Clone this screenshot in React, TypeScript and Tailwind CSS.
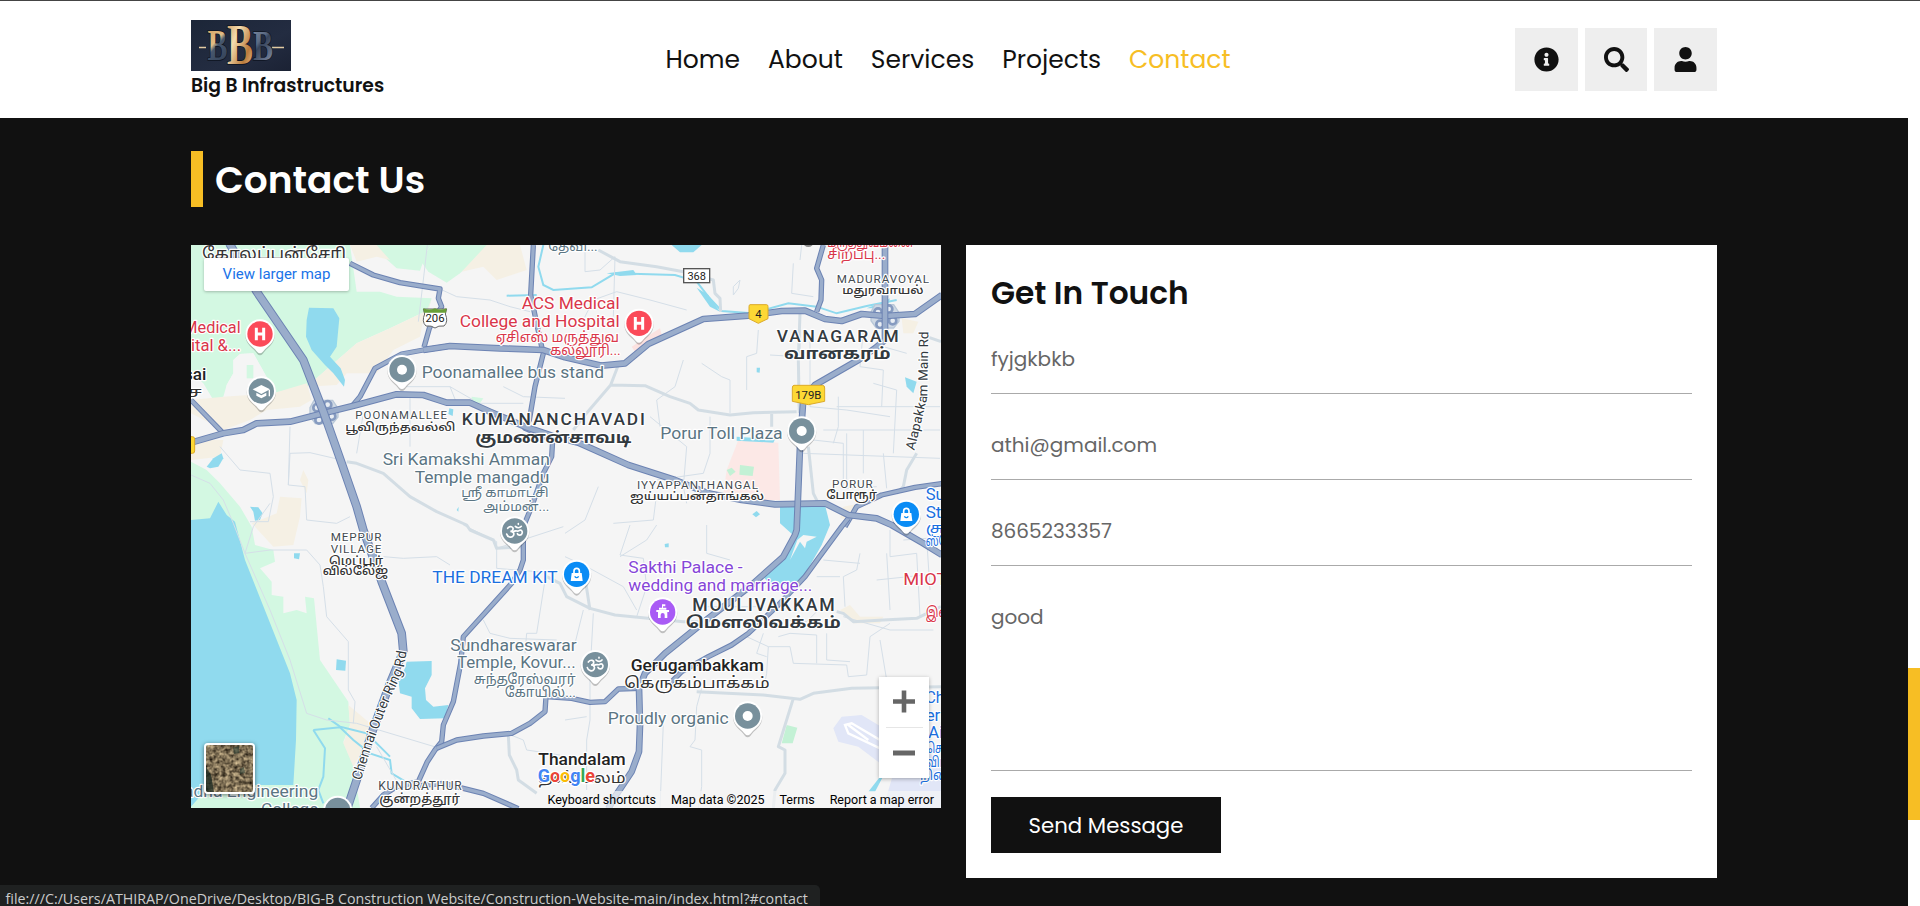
import React from "react";
import { FaInfoCircle, FaSearch, FaUser } from "react-icons/fa";

const NAV = [
  { label: "Home", cls: "text-[#111]" },
  { label: "About", cls: "text-[#111]" },
  { label: "Services", cls: "text-[#111]" },
  { label: "Projects", cls: "text-[#111]" },
  { label: "Contact", cls: "text-[#f7be24]" },
];

/* ---------- map geometry: 3 units per pixel ---------- */

const GREEN = [
  "M3 15H480L500 155L570 155L620 170L725 175L715 210L600 265L500 310L350 440L245 460L230 410L190 340L150 342L130 360L130 400L110 435L100 470L70 480L40 430L3 400Z",
  "M560 15H725L712 30L690 92L620 85L570 40Z",
  "M725 15H900L870 45L810 100L770 128L715 95L690 60Z",
  "M3 665L50 690L90 730L150 800L185 860L195 915L250 930L255 965L210 985L245 1025L245 1065L280 1070L280 1120L320 1110L350 1120L345 1070L372 1075L390 1260L475 1385L480 1455L460 1505L490 1575L510 1704H3Z",
  "M170 375h20v40h-20Z",
  "M845 470L880 475L870 490L845 485Z",
];
const BEIGE = [
  "M890 15H990L1010 90L920 120L880 80L815 95Z",
  "M725 175L700 240L690 290L610 330L560 400L470 400L440 435L350 440L500 310L600 265L715 210Z",
  "M250 460L350 430L365 480L330 500L230 510L180 540L100 570L3 520V600L100 600L90 650L3 660V480L100 470Z",
  "M480 15H560L600 60L560 50L500 65Z",
  "M270 770L335 775L330 830L310 915L250 920L185 850L260 820Z",
  "M475 1395L540 1450L530 1510L490 1580L460 1510L480 1455Z",
  "M1950 1110L1980 1095L2010 1130L2080 1130L2070 1150L1990 1150Z",
  "M2135 235L2185 245L2170 280L2140 280Z",
  "M1960 800L2010 790L1990 840L1950 835Z",
  "M340 690L355 720L350 760L330 720Z",
];
const CLEARING = "M150 342L190 340L215 385L232 420L245 460L180 468L105 470L110 435L130 400L130 360Z";
const WATER = [
  "M357 203L430 205L448 235L440 320L420 350L452 385L465 420L462 440L430 400L405 375L365 330L348 290L350 240Z",
  "M3 840L60 835L85 785L110 825L135 845L165 960L300 1300L320 1380L318 1500L310 1635H60L3 1700Z",
  "M50 680L70 655L95 640L100 655L85 680L60 685Z",
  "M180 800L205 802L218 820L210 840L195 842L190 815Z",
  "M1445 15H1535L1510 37L1470 37Z",
  "M1520 143L1555 165L1590 215L1560 200Z",
  "M1770 800L1905 795L1920 855L1895 915L1835 1020L1750 1045L1720 1010L1785 950L1815 890L1770 850Z",
  "M650 1265L725 1263L725 1305L705 1345L708 1380L730 1400L775 1395L765 1435L690 1437L665 1405L665 1370L630 1360L625 1320L645 1285Z",
  "M440 1258L468 1262L466 1292L438 1290Z",
  "M312 940L330 940L327 958L312 955Z",
  "M2145 412L2180 425L2170 460L2150 440Z",
  "M1640 590L1755 598L1750 608L1640 602Z",
  "M1700 383L1710 383L1709 398L1700 397Z",
  "M1687 823L1700 813L1710 823L1698 832Z",
  "M1424 912L1436 910L1436 922L1425 922Z",
  "M778 505L790 508L788 528L775 522Z",
  "M800 810L806 800L805 815Z",
  "M2035 1655L2070 1610L2078 1612L2055 1655Z",
  "M1250 100L1330 90L1340 105L1290 108Z",
  "M2080 185L2100 175L2090 205L2030 205Z",
];
const STREAMS = [
  "M1060 15L1045 80L1060 135L1090 150L1205 142L1275 100L1455 105L1520 125L1555 170L1595 213L1685 220L1795 190L1880 200L1940 220L2030 198L2120 180",
  "M950 167L1040 165",
  "M370 1470L405 1525L400 1610L385 1650L400 1690",
  "M370 1470L450 1462L490 1500L540 1540L600 1560L605 1600L655 1630",
  "M415 1435L450 1460L490 1470L530 1480L600 1550",
];
const MINOR = [
  "M685 245L700 120L712 15M750 147L800 170L900 180L960 200L1020 215",
  "M500 640L520 520M300 640L295 735L345 740L350 840L440 850L480 830",
  "M300 640L360 638L455 660M295 735L300 560",
  "M90 620L150 690L240 700L250 770L235 845L180 845",
  "M3 705L60 730L100 780L130 850L165 940L240 1110L300 1260L350 1420L410 1440L500 1450L740 1522",
  "M165 940L240 930L350 930L390 975L400 1040L410 1130L475 1205L475 1350L495 1385L490 1450",
  "M165 940L190 860L240 790M580 950L640 955L740 950L780 975",
  "M940 440L1000 470L1125 475M650 440L780 440L850 480M660 470L660 620M780 440L800 490L1000 490",
  "M820 855L920 905L920 985L1100 1000M920 925L1120 860M1065 1020L1040 1180L1010 1180L1005 1240",
  "M880 1140L900 1180L960 1195L1100 1200",
  "M1180 240L1210 180L1280 155L1380 180L1490 210M1185 15V95L1230 90L1275 50L1270 230",
  "M1480 360L1455 440L1400 480L1410 560M1535 370L1595 410L1620 420V520M1705 270L1700 340L1670 350V450",
  "M1380 530L1490 620L1480 740L1490 790M1560 530V640L1540 700L1400 720",
  "M1810 70L1805 160L1870 170M1835 15L1830 60M1630 140L1650 120L1645 145L1630 165Z",
  "M1740 345L1825 350V500M1830 270V340M1860 290V500L1970 510L2100 530",
  "M1945 470V560L1930 610M1940 500H2250M2020 270L2010 380L2080 390L2075 500",
  "M2080 320L2150 340M2050 430L2120 450L2110 640M1900 570H2250M1970 580V720M2020 570V700",
  "M1870 600L1960 610V745L2060 740M1840 640L2250 655M2080 640L2090 745",
  "M1400 855L1370 900L1290 950M1320 855L1290 945L1360 955L1370 1040L1340 1130",
  "M1125 880L1185 840L1225 740M1400 760L1390 840L1270 850M1550 855V940L1620 960",
  "M1180 1110L1150 1230M1210 1120L1200 1300L1200 1440L1190 1500V1650",
  "M1535 1345L1520 1400L1515 1500L1500 1520L1535 1530V1640L1525 1704",
  "M1670 1190L1735 1220L1730 1300L1720 1350M1765 1190L1800 1180L1880 1185V1270M1910 1180V1260L1980 1265",
  "M1735 1220H1800L1810 1270L1970 1275L1975 1310L2030 1305L2040 1190L2100 1150",
  "M2010 940L2000 990L1960 1010L1965 1100M2090 940L2100 1110M2100 870V950L2180 940L2190 1130",
  "M2060 1020L2250 1000M2140 900L2210 895L2220 1050M1960 1130L2100 1170L2230 1170M2070 1200L2090 1320",
  "M1880 1010L1950 1010M1900 960L2010 970M1780 1140L1850 1145L1880 1115",
  "M1340 1110L1300 1040L1190 980L1125 950M1125 1440L1190 1430M1420 1450L1410 1704",
  "M1530 1100H1700M1720 1180L1700 1240L1730 1250M560 1520L630 1640M950 1480L1000 1500L1010 1530L1110 1545",
];
const COLLECTOR = [
  "M470 665L500 670L580 700L660 770L740 815L830 855L840 870L910 900L920 925L1000 920",
  "M1225 30L1290 65L1400 80L1480 95L1570 120L1575 160L1590 175L1592 215",
  "M1285 375L1262 435L1185 525L1150 570M1262 435L1365 437L1440 470L1500 490L1525 510L1620 525L1690 518L1820 515",
  "M1830 220L1825 360L1828 520M1745 522V560M1855 620L1870 760L1885 790",
  "M2180 640L2150 690L2140 740L2120 760M2210 290L2253 305",
  "M1070 1010L1110 1030L1130 1070L1200 1105L1275 1125L1480 1145L1580 1145M1200 1110L1180 980",
  "M1520 1355L1720 1365L1830 1378L1870 1360L1985 1345L2253 1340M1810 1375L1765 1520L1785 1530V1600L1755 1650L1750 1704",
  "M1940 1115L1960 1120L1990 1145L2080 1140L2180 1135L2253 1100",
  "M955 1485L958 1545L980 1590L985 1620L1040 1660",
];
const HIGHWAYS = [
  "M480 70L550 105L630 128L750 147L745 175L755 200L735 230L718 265L702 322",
  "M485 500L510 470L555 385L635 342L700 330L780 318",
  "M3 480L95 575",
  "M1030 15L1022 165L1055 320L1060 340L1035 440L1018 540L1005 565L1088 600L1085 650L1060 700L1025 800L1000 860L1000 960L990 990L965 1030L820 1190L812 1270L790 1385L760 1455L755 1505L735 1530L712 1565L685 1625L620 1640L580 1665L545 1704",
  "M740 1525L800 1500L880 1488L965 1480L1020 1450L1065 1415L1068 1370L1145 1375L1200 1387L1245 1385L1285 1347L1350 1345",
  "M660 1640L760 1630L820 1645L880 1660L960 1695L985 1706",
  "M1900 15L1880 85L1895 120L1893 180L1880 215",
  "M1965 860L2000 800L2075 765L2175 742L2256 731",
  "M1975 835L1955 860L1885 955L1845 1010L1765 1095L1675 1180L1625 1215L1555 1250L1475 1295L1440 1330",
];
const TRUNK = [
  "M3 608L100 580L160 570L200 550L300 545L400 520L500 495L620 463L700 465L770 488L840 488L900 515L1005 560L1088 588L1165 608L1315 675L1455 720L1555 760L1655 780L1755 793L1905 790L1975 825L2060 835L2105 855L2200 910L2256 945",
  "M700 330L780 318L930 325L1060 330L1125 352L1235 377L1305 370L1375 312L1540 237L1675 227L1775 213L1845 212L1905 237L1955 243L2015 222L2085 228L2175 222L2256 165",
  "M2085 12V300L2055 325L2005 360L1875 435L1840 475L1837 520L1830 620L1820 870L1815 885L1780 950L1685 1035L1555 1135L1425 1240L1365 1300L1347 1345L1350 1455L1347 1535L1325 1595L1275 1670L1255 1706",
];
const RING = "M118 10L150 65L200 155L340 360L400 515L455 670L500 800L520 870L575 1025L635 1180L640 1235L600 1330L545 1480L500 1620L470 1710";

function Road({ d, w, fill = "#9aadcb", edge = "#6c83b3" }: { d: string; w: number; fill?: string; edge?: string }) {
  return (
    <g fill="none" strokeLinejoin="round">
      <path d={d} stroke={edge} strokeWidth={w} />
      <path d={d} stroke={fill} strokeWidth={w - 6} />
    </g>
  );
}

type LabelProps = {
  x: number;
  y: number;
  w: number;
  size?: number;
  color?: string;
  weight?: number;
  spaced?: boolean;
  children: string;
};

function Label({ x, y, w, size = 52, color = "#5b7583", weight = 400, spaced, children }: LabelProps) {
  return (
    <text
      x={x}
      y={y}
      textLength={w}
      lengthAdjust={spaced ? "spacing" : "spacingAndGlyphs"}
      fontSize={size}
      fontWeight={weight}
      fill={color}
      stroke="#fff"
      strokeWidth={7}
      strokeLinejoin="round"
      paintOrder="stroke"
    >
      {children}
    </text>
  );
}

function Pin({ x, y, color, children }: { x: number; y: number; color: string; children?: React.ReactNode }) {
  return (
    <g transform={`translate(${x} ${y})`}>
      <path
        d="M0 60C-6 60-10 53-15 47C-22 38-44 26-44 0A44 44 0 0 1 44 0C44 26 22 38 15 47C10 53 6 60 0 60Z"
        fill="#000"
        opacity=".22"
        transform="translate(0 4)"
      />
      <path d="M0 58C-6 58-10 52-15 46C-22 38-44 26-44 0A44 44 0 0 1 44 0C44 26 22 38 15 46C10 52 6 58 0 58Z" fill="#fff" />
      <circle r="38" fill={color} />
      {children}
    </g>
  );
}

const Dot = () => <circle r="15" fill="#fff" />;
const Hospital = () => <path d="M-11 -19V19M11 -19V19M-11 0H11" stroke="#fff" strokeWidth="9" fill="none" />;
const Om = () => (
  <g fill="none" stroke="#fff" strokeWidth="5" strokeLinecap="round">
    <path d="M-21 -8C-14 -17-3 -13-5 -5C-6 0-12 1-13 1C-4 1 0 8-4 14C-9 22-22 18-24 9" />
    <path d="M-5 3C4 -4 8 3 13 -1C20 -6 25 2 22 8C19 15 10 13 8 8" />
    <path d="M2 -14C8 -8 16 -9 20 -14M11 -22V-20" />
  </g>
);
const Bag = () => (
  <g>
    <path d="M-15 -4H15L18 20H-18Z" fill="#fff" />
    <path d="M-8 -3V-10A8 8 0 0 1 8 -10V-3" fill="none" stroke="#fff" strokeWidth="5" />
    <path d="M-6 6Q0 14 6 6" fill="none" stroke="#0a8cf5" strokeWidth="4" />
  </g>
);

function Interchange({ x, y }: { x: number; y: number }) {
  return (
    <g transform={`translate(${x} ${y})`}>
      <path d="M-30 -34H26L42 -10V16L26 36H-26L-42 14V-12Z" fill="#cfd9e4" stroke="#b9c8d8" strokeWidth="4" />
      <g fill="#e8edf3" stroke="#869bc0" strokeWidth="8">
        <circle cx="-21" cy="-12" r="11" />
        <circle cx="11" cy="-21" r="11" />
        <circle cx="23" cy="14" r="11" />
        <circle cx="-15" cy="25" r="11" />
      </g>
    </g>
  );
}

function MapArt() {
  return (
    <svg
      viewBox="3 15 2250 1689"
      className="block h-full w-full font-[Roboto,'Noto_Sans_Tamil','Noto_Sans',sans-serif]"
      preserveAspectRatio="none"
    >
      <rect x="0" y="0" width="2256" height="1710" fill="#f5f5f5" />
      <g fill="#d3f8e2">{GREEN.map((d) => <path key={d} d={d} />)}</g>
      <path d={CLEARING} fill="#f5f5f5" />
      <path d="M170 375h20v40h-20Z" fill="#d3f8e2" />
      <g fill="#f5f0e4">{BEIGE.map((d) => <path key={d} d={d} />)}</g>
      <path d="M1645 600L1765 608L1770 780L1690 780L1600 760L1610 690Z" fill="#fce8e6" />
      <path d="M1325 320L1370 290L1410 265L1415 285L1370 320L1335 335Z" fill="#fce2e0" />
      <path d="M1650 675L1692 680L1688 708L1648 704ZM1610 690L1625 683L1637 695L1620 708ZM1790 1455L1822 1463L1808 1510L1775 1510Z" fill="#c3f1d5" />
      <path d="M1930 1465L1955 1430L2015 1425L2065 1455L2253 1560V1704H2080L2110 1600L2005 1520L1945 1505Z" fill="#e1e6f7" />
      <path d="M1965 1455L1985 1450L2070 1500V1525L1975 1480ZM1975 1455L2035 1500" fill="none" stroke="#fff" strokeWidth="7" />
      <g fill="#90daee">{WATER.map((d) => <path key={d} d={d} />)}</g>
      <path d="M1822 900L1840 885L1880 890L1850 905L1845 925L1830 905L1800 960Z" fill="#f5f5f5" />
      <g fill="none" stroke="#90daee" strokeWidth="6">{STREAMS.map((d) => <path key={d} d={d} />)}</g>
      <g fill="none" stroke="#d5dfe8" strokeWidth="3">{MINOR.map((d) => <path key={d} d={d} />)}</g>
      <g fill="none" stroke="#d3dde4" strokeWidth="9" strokeLinejoin="round">{COLLECTOR.map((d) => <path key={d} d={d} />)}</g>
      <Interchange x={402} y={515} />
      <Interchange x={2085} y={228} />
      {HIGHWAYS.map((d) => <Road key={d} d={d} w={16} />)}
      {TRUNK.map((d) => <Road key={d} d={d} w={20} />)}
      <Road d={RING} w={26} />

      {/* route shields */}
      <path d="M700 207H770L766 222Q776 245 762 258Q745 256 735 264Q725 256 708 258Q694 245 704 222Z" fill="#fff" stroke="#666" strokeWidth="3" />
      <path d="M700 205Q718 212 735 205Q752 212 770 205L768 218H702Z" fill="#689f38" />
      <text x="735" y="246" textAnchor="middle" fontSize="34" fill="#222">206</text>
      <rect x="1481" y="86" width="78" height="42" fill="#fff" stroke="#555" strokeWidth="4" />
      <text x="1520" y="120" textAnchor="middle" fontSize="33" fill="#222">368</text>
      <path d="M1680 194H1730Q1734 194 1734 200V236L1705 250L1677 236V200Q1677 194 1680 194Z" fill="#fdd835" stroke="#dcaa28" strokeWidth="3" />
      <text x="1705" y="234" textAnchor="middle" fontSize="34" fill="#222">4</text>
      <path d="M1812 436H1898Q1904 436 1904 444V484L1855 494L1807 484V444Q1807 436 1812 436Z" fill="#fdd835" stroke="#dcaa28" strokeWidth="3" />
      <text x="1855" y="478" textAnchor="middle" fontSize="34" fill="#222">179B</text>
      <rect x="-20" y="590" width="34" height="50" rx="7" fill="#fdd835" stroke="#dcaa28" strokeWidth="3" />

      {/* places */}
      <Label x={36} y={56} w={432} size={48} color="#333">கோலப்பன்சேரி</Label>
      <Label x={1075} y={32} w={148} size={40}>தேவி...</Label>
      <Label x={-20} y={280} w={172} color="#d9364a">Medical</Label>
      <Label x={3} y={333} w={150} color="#d9364a">ital &amp;...</Label>
      <Label x={-18} y={419} w={67} size={48} color="#222" weight={500}>sai</Label>
      <Label x={-10} y={471} w={46} size={44} color="#333">ச</Label>
      <Label x={995} y={207} w={294} color="#d9364a">ACS Medical</Label>
      <Label x={809} y={260} w={480} color="#d9364a">College and Hospital</Label>
      <Label x={917} y={305} w={370} size={42} color="#d9364a">ஏசிஎஸ் மருத்துவ</Label>
      <Label x={1080} y={345} w={212} size={42} color="#d9364a">கல்லூரி...</Label>
      <Label x={695} y={413} w={547}>Poonamallee bus stand</Label>
      <Label x={496} y={538} w={275} size={34} color="#444b50" spaced>POONAMALLEE</Label>
      <Label x={466} y={573} w={330} size={34} color="#333" weight={500}>பூவிருந்தவல்லி</Label>
      <Label x={815} y={556} w={550} size={52} color="#333a3f" weight={500} spaced>KUMANANCHAVADI</Label>
      <Label x={856} y={608} w={468} size={47} color="#333a3f" weight={700}>குமணன்சாவடி</Label>
      <Label x={578} y={675} w={502}>Sri Kamakshi Amman</Label>
      <Label x={674} y={728} w={404}>Temple mangadu</Label>
      <Label x={814} y={772} w={262} size={40}>ஸ்ரீ காமாட்சி</Label>
      <Label x={880} y={812} w={198} size={40}>அம்மன்...</Label>
      <Label x={1912} y={58} w={174} size={42} color="#d9364a">சிறப்பு...</Label>
      <Label x={1912} y={20} w={260} size={42} color="#d9364a">மருத்துவமனை</Label>
      <Label x={1940} y={129} w={277} size={35} color="#444b50" spaced>MADURAVOYAL</Label>
      <Label x={1957} y={163} w={244} size={35} color="#333" weight={500}>மதுரவாயல்</Label>
      <Label x={1760} y={305} w={366} size={52} color="#333a3f" weight={500} spaced>VANAGARAM</Label>
      <Label x={1782} y={357} w={320} size={47} color="#333a3f" weight={700}>வானகரம்</Label>
      <Label x={1411} y={598} w={367}>Porur Toll Plaza</Label>
      <Label x={1341} y={746} w={363} size={35} color="#444b50" spaced>IYYAPPANTHANGAL</Label>
      <Label x={1320} y={780} w={402} size={34} color="#333" weight={500}>ஐய்யப்பன்தாங்கல்</Label>
      <Label x={1926} y={744} w={122} size={35} color="#444b50" spaced>PORUR</Label>
      <Label x={1909} y={778} w={152} size={36} color="#333" weight={500}>போரூர்</Label>
      <Label x={2207} y={781} w={128} color="#1a6fe0">Super</Label>
      <Label x={2207} y={834} w={120} color="#1a6fe0">Store</Label>
      <Label x={2207} y={880} w={100} size={42} color="#1a6fe0">சூப்</Label>
      <Label x={2207} y={918} w={100} size={42} color="#1a6fe0">ஸ்டோ</Label>
      <Label x={422} y={904} w={152} size={35} color="#444b50" spaced>MEPPUR</Label>
      <Label x={422} y={938} w={152} size={35} color="#444b50" spaced>VILLAGE</Label>
      <Label x={417} y={974} w={162} size={36} color="#333" weight={500}>மெப்பூர்</Label>
      <Label x={398} y={1006} w={197} size={36} color="#333" weight={500}>வில்லேஜ்</Label>
      <Label x={727} y={1029} w={376} color="#1a6fe0">THE DREAM KIT</Label>
      <Label x={1315} y={1000} w={343} color="#8646d8">Sakthi Palace -</Label>
      <Label x={1315} y={1053} w={552} color="#8646d8">wedding and marriage...</Label>
      <Label x={1507} y={1114} w={427} size={53} color="#333a3f" weight={500} spaced>MOULIVAKKAM</Label>
      <Label x={1487} y={1164} w={465} size={47} color="#333a3f" weight={700}>மௌலிவக்கம்</Label>
      <Label x={2140} y={1035} w={160} color="#d9364a">MIOT I</Label>
      <Label x={2207} y={1130} w={80} size={44} color="#d9364a">இன்</Label>
      <Label x={781} y={1232} w={379}>Sundhareswarar</Label>
      <Label x={801} y={1285} w={356}>Temple, Kovur...</Label>
      <Label x={851} y={1331} w={306} size={41}>சுந்தரேஸ்வரர்</Label>
      <Label x={944} y={1370} w={214} size={41}>கோயில்...</Label>
      <Label x={1322} y={1293} w={400} size={52} color="#222" weight={500}>Gerugambakkam</Label>
      <Label x={1303} y={1343} w={436} size={46} color="#333">கெருகம்பாக்கம்</Label>
      <Label x={1253} y={1453} w={363}>Proudly organic</Label>
      <Label x={1045} y={1575} w={262} size={52} color="#222" weight={500}>Thandalam</Label>
      <Label x={1045} y={1629} w={262} size={46} color="#333">தண்டலம்</Label>
      <Label x={565} y={1651} w={250} size={36} color="#444b50" spaced>KUNDRATHUR</Label>
      <Label x={568} y={1688} w={242} size={38} color="#333" weight={500}>குன்றத்தூர்</Label>
      <Label x={-18} y={1671} w={403}>adha Engineering</Label>
      <Label x={213} y={1724} w={172}>College</Label>
      <Label x={2207} y={1390} w={168} color="#1a6fe0">Chennai</Label>
      <Label x={2207} y={1444} w={72} color="#1a6fe0">ern</Label>
      <Label x={2215} y={1495} w={152} color="#1a6fe0">Airport</Label>
      <Label x={2207} y={1538} w={90} size={42} color="#1a6fe0">சென்</Label>
      <Label x={2207} y={1580} w={90} size={42} color="#1a6fe0">விமா</Label>
      <Label x={2190} y={1620} w={120} size={42} color="#1a6fe0">நிலை</Label>

      {/* labels running along roads */}
      <defs>
        <path id="outer-ring" d="M512 1622L545 1520L590 1400L640 1290L652 1225" />
        <path id="alapakkam" d="M2173 632L2195 540L2212 470L2215 270" />
      </defs>
      <text fontSize="42" fill="#333a40" stroke="#fff" strokeWidth="7" strokeLinejoin="round" paintOrder="stroke">
        <textPath href="#outer-ring" textLength="412" lengthAdjust="spacingAndGlyphs">Chennai Outer Ring Rd</textPath>
      </text>
      <text fontSize="39" fill="#333a40" stroke="#fff" strokeWidth="7" strokeLinejoin="round" paintOrder="stroke">
        <textPath href="#alapakkam" textLength="362" lengthAdjust="spacingAndGlyphs">Alapakkam Main Rd</textPath>
      </text>

      {/* pins */}
      <Pin x={210} y={282} color="#fb4a59"><Hospital /></Pin>
      <Pin x={1347} y={250} color="#fb4a59"><Hospital /></Pin>
      <Pin x={214} y={453} color="#78909c">
        <path d="M0 -18L26 -5L0 9L-26 -5ZM-15 5L0 13L15 5V14L0 22L-15 14ZM22 -3H26V16H22Z" fill="#fff" />
      </Pin>
      <Pin x={636} y={389} color="#78909c"><Dot /></Pin>
      <Pin x={1835} y={573} color="#78909c"><Dot /></Pin>
      <Pin x={1673} y={1428} color="#78909c"><Dot /></Pin>
      <Pin x={974} y={873} color="#78909c"><Om /></Pin>
      <Pin x={1216} y={1274} color="#78909c"><Om /></Pin>
      <Pin x={2149} y={823} color="#0a8cf5"><Bag /></Pin>
      <Pin x={1160} y={1003} color="#0a8cf5"><Bag /></Pin>
      <Pin x={1418} y={1116} color="#a95bf5">
        <g fill="#fff">
          <path d="M-19 -6H19V0H14V18H6V9A6 6 0 0 0 -6 9V18H-14V0H-19Z" />
          <path d="M-11 -13H11V-7H-11ZM-2 -23H8V-17H1V-12H-2Z" />
        </g>
      </Pin>
      <Pin x={443} y={1711} color="#78909c" />
      <circle cx="1855" cy="5" r="16" fill="#8a8a8a" />

      <text x="1043" y="1626" fontSize="56" fontWeight="700" textLength="172" lengthAdjust="spacingAndGlyphs" stroke="#fff" strokeWidth="7" paintOrder="stroke">
        <tspan fill="#4285f4">G</tspan>
        <tspan fill="#ea4335">o</tspan>
        <tspan fill="#fbbc05">o</tspan>
        <tspan fill="#4285f4">g</tspan>
        <tspan fill="#34a853">l</tspan>
        <tspan fill="#ea4335">e</tspan>
      </text>
    </svg>
  );
}

function MapPanel() {
  return (
    <div className="relative h-[563px] w-[750px] shrink-0 overflow-hidden font-[Roboto,sans-serif]">
      <MapArt />
      <a className="absolute left-[13px] top-[13px] flex h-[33px] w-[145px] items-center justify-center rounded-[2px] bg-white text-[15px] text-[#1a73e8] shadow-[0_1px_3px_rgba(0,0,0,0.25)]">
        View larger map
      </a>
      <div className="absolute left-[13px] top-[498px] h-[51px] w-[51px] overflow-hidden rounded-[4px] border-2 border-white shadow-[0_1px_4px_rgba(0,0,0,0.5)]">
        <svg viewBox="0 0 47 47" className="h-full w-full">
          <filter id="terrain" x="0" y="0" width="100%" height="100%" colorInterpolationFilters="sRGB">
            <feTurbulence type="fractalNoise" baseFrequency="0.25" numOctaves="4" seed="8" />
            <feColorMatrix values="1 0 0 0 0  0.92 0 0 0 -0.02  0.75 0 0 0 -0.04  0 0 0 0 1" />
          </filter>
          <rect width="47" height="47" filter="url(#terrain)" />
          <path d="M0 22L5 30L8 47H0Z" fill="#17261f" opacity=".75" />
          <path d="M27 3L33 1V8L28 9ZM34 24L38 22L39 28L34 29Z" fill="#23372f" opacity=".6" />
        </svg>
      </div>
      <div className="absolute left-[688px] top-[432px] flex h-[101px] w-[50px] flex-col items-center bg-white shadow-[0_1px_4px_rgba(0,0,0,0.3)]">
        <svg viewBox="0 0 50 50" className="h-[50px] w-[50px]"><path d="M14 24.5H36M25 13.5V35.5" stroke="#666" strokeWidth="4.6" /></svg>
        <div className="h-px w-[37px] bg-[#e6e6e6]" />
        <svg viewBox="0 0 50 50" className="h-[50px] w-[50px]"><path d="M14 25H36" stroke="#666" strokeWidth="5" /></svg>
      </div>
      <div className="absolute bottom-0 right-0 flex h-[17px] items-center gap-[15px] bg-[#f5f5f5]/70 pl-[6px] pr-[7px] pt-[2px] text-[12.5px] leading-none whitespace-nowrap text-black">
        <span>Keyboard shortcuts</span>
        <span>Map data ©2025</span>
        <span>Terms</span>
        <span>Report a map error</span>
      </div>
    </div>
  );
}

function Logo() {
  return (
    <svg viewBox="0 0 100 51" className="block h-[51px] w-[100px]">
      <defs>
        <linearGradient id="navy" x1="0" y1="0" x2="1" y2="1">
          <stop offset="0" stopColor="#1c2638" />
          <stop offset=".6" stopColor="#232c41" />
          <stop offset="1" stopColor="#1b2234" />
        </linearGradient>
        <linearGradient id="gold" x1="0" y1="0" x2="1" y2="1">
          <stop offset="0" stopColor="#c68f55" />
          <stop offset=".35" stopColor="#f4dcae" />
          <stop offset=".7" stopColor="#b97a3c" />
          <stop offset="1" stopColor="#f0d7a6" />
        </linearGradient>
        <linearGradient id="copper" x1="0" y1="0" x2=".45" y2="1">
          <stop offset="0" stopColor="#d09a58" />
          <stop offset=".5" stopColor="#e3bd85" />
          <stop offset=".6" stopColor="#46566d" />
          <stop offset="1" stopColor="#34435a" />
        </linearGradient>
        <linearGradient id="steel" x1="0" y1="0" x2=".5" y2="1">
          <stop offset="0" stopColor="#8492aa" />
          <stop offset=".45" stopColor="#5b6a83" />
          <stop offset=".55" stopColor="#37445b" />
          <stop offset="1" stopColor="#76849c" />
        </linearGradient>
      </defs>
      <rect width="100" height="51" fill="url(#navy)" />
      <path d="M8 27.5H15M81 27.5H93" stroke="#e3cba3" strokeWidth="1.4" />
      <g className="font-['Liberation_Serif',serif]" fontWeight="700" stroke="#0d1320" strokeWidth="1.6" paintOrder="stroke">
        <text x="16.5" y="40" fontSize="44" textLength="20" lengthAdjust="spacingAndGlyphs" fill="url(#copper)">B</text>
        <text x="62" y="40" fontSize="43" textLength="20" lengthAdjust="spacingAndGlyphs" fill="url(#steel)">B</text>
        <text x="36" y="44" fontSize="56" textLength="26" lengthAdjust="spacingAndGlyphs" fill="url(#gold)">B</text>
      </g>
    </svg>
  );
}

const FIELD = "block h-[86px] w-full border-b border-[#aaa] bg-transparent text-[20px] text-[#666] outline-none";

export default function App() {
  return (
    <div className="relative flex h-[906px] w-[1920px] flex-col overflow-hidden bg-white font-[Poppins,Inter,sans-serif] text-[#111]">
      <header className="flex h-[118px] shrink-0 items-start justify-between border-t border-[#444] pl-[191px] pr-[203px]">
        <div className="flex w-[313px] flex-col pt-[19px]">
          <Logo />
          <span className="text-[18.75px] font-semibold leading-[29px] whitespace-nowrap">Big B Infrastructures</span>
        </div>
        <nav className="flex gap-[28px] pt-[40px]">
          {NAV.map((item) => (
            <a key={item.label} className={`text-[25px] leading-[38px] whitespace-nowrap ${item.cls}`}>
              {item.label}
            </a>
          ))}
        </nav>
        <div className="flex w-[325px] justify-end gap-[7px] pt-[27px]">
          {[FaInfoCircle, FaSearch, FaUser].map((Icon, i) => (
            <button key={i} className="flex h-[63px] w-[62.5px] items-center justify-center bg-[#eee]">
              <Icon className="h-[25px] w-[25px]" />
            </button>
          ))}
        </div>
      </header>

      <div className="flex flex-1">
        <main className="w-[1908px] bg-[#111] pl-[191px] pt-[33px]">
          <h1 className="flex h-[56px] items-center border-l-[12px] border-[#f7be24] pl-[12px] pt-[2px] text-[37.5px] font-semibold text-white">
            Contact Us
          </h1>
          <div className="mt-[38px] flex gap-[25px]">
            <MapPanel />
            <form className="flex h-[633px] w-[751px] flex-col bg-white px-[25px] pt-[25px]">
              <h2 className="h-[38px] text-[31.25px] font-semibold leading-[47px]">Get In Touch</h2>
              <input className={`${FIELD} pt-[16px]`} defaultValue="fyjgkbkb" />
              <input className={`${FIELD} pt-[16px]`} defaultValue="athi@gmail.com" />
              <input className={`${FIELD} pt-[16px]`} defaultValue="8665233357" />
              <textarea
                className="block h-[205px] w-full resize-none border-b border-[#aaa] pt-[36px] text-[20px] leading-[30px] text-[#666] outline-none"
                defaultValue="good"
              />
              <button type="button" className="mt-[26px] h-[56px] w-[230px] bg-[#111] pt-[2px] text-[21.25px] text-white">
                Send Message
              </button>
            </form>
          </div>
        </main>
        <aside className="flex w-[12px] flex-col bg-white pt-[550px]">
          <div className="h-[152px] bg-[#f7be24]" />
        </aside>
      </div>

      <div className="absolute bottom-0 left-0 h-[21px] w-[820px] overflow-hidden rounded-tr-[5px] bg-[#1f2121] pl-[5.5px] font-['Open_Sans',sans-serif] text-[14.25px] leading-[27px] whitespace-nowrap text-[#ccc]">
        file:///C:/Users/ATHIRAP/OneDrive/Desktop/BIG-B Construction Website/Construction-Website-main/index.html?#contact
      </div>
    </div>
  );
}
